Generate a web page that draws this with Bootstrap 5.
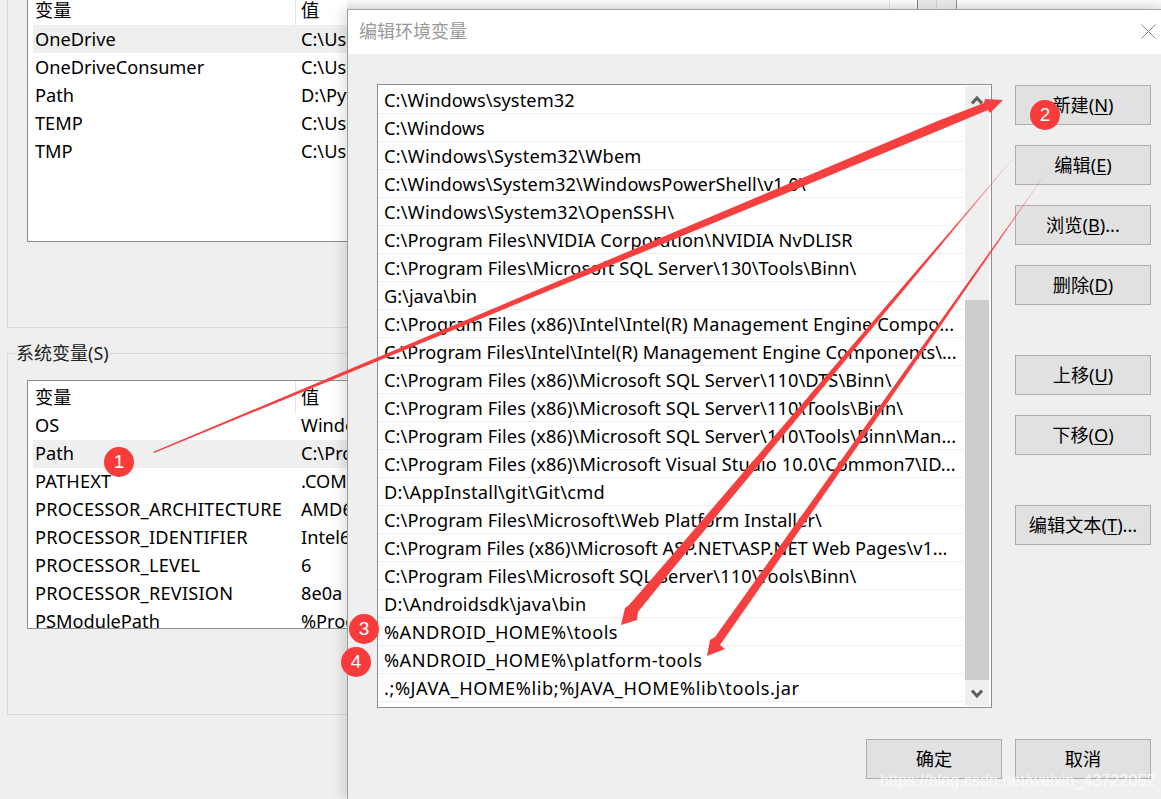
<!DOCTYPE html>
<html lang="zh">
<head>
  <meta charset="UTF-8">
  <title>编辑环境变量</title>
  <link href="https://cdn.jsdelivr.net/npm/bootstrap@5.3.0/dist/css/bootstrap.min.css" rel="stylesheet">
  <style>
    html, body { height: 100%; }
    body {
      background: #efefef;
      overflow: hidden;
      color: #000;
      font-family: "Noto Sans", "Noto Sans CJK SC", sans-serif;
      font-size: 18.2px;
      position: relative;
    }
    /* windows on the desktop */
    .win-back { position: absolute; left: 0; top: 0; width: 347px; height: 799px; background: #efefef; padding-left: 7px; overflow: hidden; }
    .win-dialog {
      position: absolute; left: 347px; top: 9px; width: 814px; height: 790px;
      background: #efefef; border-left: 1px solid #9b9b9b; border-top: 1px solid #a5a5a5;
      box-shadow: -6px 0 10px rgba(0,0,0,.10);
    }
    .top-strip { position: absolute; left: 347px; top: 0; width: 814px; height: 10px; background: linear-gradient(#fafafa, #e8e8e8); }
    .top-strip::before { content: ""; position: absolute; left: 542px; top: 0; height: 10px; border-left: 1px solid #dcdcdc; }
    .top-col { position: absolute; top: 0; width: 40px; height: 10px; background: #e6e6e6; border-left: 1px solid #7f7f8c; border-right: 1px solid #8c8c8c; left: 570px; }
    .top-col::after { content: ""; position: absolute; left: 18px; top: 0; height: 10px; border-left: 1px solid #d0d0d0; }

    .grp { border: 1px solid #d9d9d9; border-right: 0; padding-left: 19px; position: relative; width: 400px; }
    .grp-user { height: 328px; margin-bottom: 25px; border-top: 0; }
    .grp-sys { height: 362px; padding-top: 26px; }
    .grp-label { position: absolute; left: 7px; top: -13px; background: #efefef; padding: 0 1px; font-size: 18px; line-height: 24px; color: #222; }
    .var-box { width: 500px; background: #fff; border: 1px solid #8e8e8e; overflow: hidden; padding: 0 5px; }
    .grp-user .var-box { height: 242px; border-top: 0; }
    .grp-sys .var-box { height: 249px; }
    .var-row { height: 28px; line-height: 27px; white-space: nowrap; padding-left: 2px; }
    .grp-user .var-row { padding-top: 1px; }
    .var-row.is-sel { background: #efefef; }
    .var-name { width: 266px; flex: none; }
    .var-head .var-name { border-right: 1px solid #e2e2e2; width: 261px; margin-right: 5px; }
    .grp-user .var-head { height: 25px; line-height: 20px; padding-top: 0; }
    .grp-sys .var-head { height: 31px; line-height: 33px; }
    .ls-slight { letter-spacing: .1px; }
    .ls-caps { letter-spacing: .22px; }
    .ls-wide { letter-spacing: .45px; }
    .ls-wider { letter-spacing: .57px; }

    .dlg-title { height: 44px; background: #fff; color: #999; font-size: 18px; line-height: 43px; padding-left: 11px; position: relative; }
    .dlg-close { position: absolute; right: 5px; top: 14px; width: 15px; height: 15px; }
    .dlg-main { padding: 30px 10px 0 29px; gap: 23px; }
    .path-box { width: 615px; height: 624px; flex: none; background: #fff; border: 1px solid #8e8e8e; padding: 1px 2px 1px 0; }
    .path-list { width: 587px; flex: none; }
    .path-row { height: 28px; line-height: 27px; padding: 1px 0 0 6px; border-bottom: 1px solid #efefef; margin-right: 1px; white-space: nowrap; overflow: hidden; }
    .path-scroll { width: 24px; background: #efefef; }
    .sb-up { height: 28px; }
    .sb-down { height: 26px; }
    .sb-track { height: 186px; }
    .sb-thumb { height: 380px; background: #cdcdcd; }

    .side-btns { width: 136px; padding-top: 1px; }
    .dlg-btn {
      width: 136px; height: 40px; padding: 0; border-radius: 0;
      background: #e1e1e1; border: 1px solid #adadad; color: #000;
      font-size: 18.2px; line-height: 38px;
    }
    .dlg-btn u { text-underline-offset: 2px; }
    .btn-near { margin-top: 20px; }
    .btn-far { margin-top: 50px; }
    .dlg-foot { padding: 31px 10px 0 0; gap: 13px; }
    .watermark { position: absolute; left: 880px; top: 769px; color: rgba(255,255,255,.78); font-family: "Liberation Sans", sans-serif; font-size: 16.2px; line-height: 22px; white-space: nowrap; }

    .marks { position: absolute; left: 0; top: 0; }
    .mark-no { font-family: "Liberation Sans", sans-serif; }
  </style>
</head>
<body>

  <div class="win-back">
    <div class="grp grp-user">
      <div class="var-box">
        <div class="var-row var-head d-flex"><div class="var-name">变量</div><div>值</div></div>
        <div class="var-row is-sel d-flex"><div class="var-name">OneDrive</div><div>C:\Users</div></div>
        <div class="var-row d-flex"><div class="var-name">OneDriveConsumer</div><div>C:\Users</div></div>
        <div class="var-row d-flex"><div class="var-name">Path</div><div>D:\Python</div></div>
        <div class="var-row d-flex"><div class="var-name">TEMP</div><div>C:\Users</div></div>
        <div class="var-row d-flex"><div class="var-name">TMP</div><div>C:\Users</div></div>
      </div>
    </div>
    <div class="grp grp-sys">
      <div class="grp-label">系统变量(S)</div>
      <div class="var-box">
        <div class="var-row var-head d-flex"><div class="var-name">变量</div><div>值</div></div>
        <div class="var-row d-flex"><div class="var-name">OS</div><div>Windows_NT</div></div>
        <div class="var-row is-sel d-flex"><div class="var-name">Path</div><div>C:\Program</div></div>
        <div class="var-row d-flex"><div class="var-name ls-caps">PATHEXT</div><div>.COM;.EXE</div></div>
        <div class="var-row d-flex"><div class="var-name ls-caps">PROCESSOR_ARCHITECTURE</div><div>AMD64</div></div>
        <div class="var-row d-flex"><div class="var-name ls-caps">PROCESSOR_IDENTIFIER</div><div>Intel64</div></div>
        <div class="var-row d-flex"><div class="var-name ls-caps">PROCESSOR_LEVEL</div><div>6</div></div>
        <div class="var-row d-flex"><div class="var-name ls-caps">PROCESSOR_REVISION</div><div>8e0a</div></div>
        <div class="var-row d-flex"><div class="var-name">PSModulePath</div><div>%ProgramFiles%</div></div>
      </div>
    </div>
  </div>
  <div class="top-strip"><div class="top-col"></div></div>

  <div class="win-dialog">
    <div class="dlg-title">编辑环境变量
      <svg class="dlg-close" viewBox="0 0 15 15"><path d="M.5 .5 14.5 14.5M14.5 .5 .5 14.5" stroke="#8a8a8a" stroke-width="1" fill="none"/></svg>
    </div>
    <div class="dlg-main d-flex">
      <div class="path-box d-flex">
        <div class="path-list">
          <div class="path-row ls-slight">C:\Windows\system32</div>
          <div class="path-row">C:\Windows</div>
          <div class="path-row ls-caps">C:\Windows\System32\Wbem</div>
          <div class="path-row ls-slight">C:\Windows\System32\WindowsPowerShell\v1.0\</div>
          <div class="path-row ls-caps">C:\Windows\System32\OpenSSH\</div>
          <div class="path-row ls-slight">C:\Program Files\NVIDIA Corporation\NVIDIA NvDLISR</div>
          <div class="path-row ls-slight">C:\Program Files\Microsoft SQL Server\130\Tools\Binn\</div>
          <div class="path-row">G:\java\bin</div>
          <div class="path-row ls-slight">C:\Program Files (x86)\Intel\Intel(R) Management Engine Compo...</div>
          <div class="path-row">C:\Program Files\Intel\Intel(R) Management Engine Components\...</div>
          <div class="path-row ls-slight">C:\Program Files (x86)\Microsoft SQL Server\110\DTS\Binn\</div>
          <div class="path-row ls-slight">C:\Program Files (x86)\Microsoft SQL Server\110\Tools\Binn\</div>
          <div class="path-row ls-slight">C:\Program Files (x86)\Microsoft SQL Server\110\Tools\Binn\Man...</div>
          <div class="path-row ls-slight">C:\Program Files (x86)\Microsoft Visual Studio 10.0\Common7\ID...</div>
          <div class="path-row ls-caps">D:\AppInstall\git\Git\cmd</div>
          <div class="path-row ls-slight">C:\Program Files\Microsoft\Web Platform Installer\</div>
          <div class="path-row">C:\Program Files (x86)\Microsoft ASP.NET\ASP.NET Web Pages\v1...</div>
          <div class="path-row ls-slight">C:\Program Files\Microsoft SQL Server\110\Tools\Binn\</div>
          <div class="path-row ls-caps">D:\Androidsdk\java\bin</div>
          <div class="path-row ls-wide">%ANDROID_HOME%\tools</div>
          <div class="path-row ls-wide">%ANDROID_HOME%\platform-tools</div>
          <div class="path-row ls-wider">.;%JAVA_HOME%lib;%JAVA_HOME%lib\tools.jar</div>
        </div>
        <div class="path-scroll d-flex flex-column">
          <div class="sb-up d-flex align-items-center justify-content-center">
            <svg width="12" height="9" viewBox="0 0 12 9"><path d="M1 7.5 6 2 11 7.5" fill="none" stroke="#606060" stroke-width="3"/></svg>
          </div>
          <div class="sb-track"></div>
          <div class="sb-thumb"></div>
          <div class="sb-down d-flex align-items-center justify-content-center">
            <svg width="12" height="9" viewBox="0 0 12 9"><path d="M1 1.5 6 7 11 1.5" fill="none" stroke="#606060" stroke-width="3"/></svg>
          </div>
        </div>
      </div>
      <div class="side-btns d-flex flex-column">
        <button class="btn dlg-btn">新建(<u>N</u>)</button>
        <button class="btn dlg-btn btn-near">编辑(<u>E</u>)</button>
        <button class="btn dlg-btn btn-near">浏览(<u>B</u>)...</button>
        <button class="btn dlg-btn btn-near">删除(<u>D</u>)</button>
        <button class="btn dlg-btn btn-far">上移(<u>U</u>)</button>
        <button class="btn dlg-btn btn-near">下移(<u>O</u>)</button>
        <button class="btn dlg-btn btn-far">编辑文本(<u>T</u>)...</button>
      </div>
    </div>
    <div class="dlg-foot d-flex justify-content-end">
      <button class="btn dlg-btn">确定</button>
      <button class="btn dlg-btn">取消</button>
    </div>
  </div>

  <svg class="marks" width="1161" height="799" viewBox="0 0 1161 799">
    <defs>
      <linearGradient id="fade3" gradientUnits="userSpaceOnUse" x1="1020" y1="150" x2="940" y2="245">
        <stop offset="0" stop-color="#f64040" stop-opacity=".2"/>
        <stop offset="1" stop-color="#f64040"/>
      </linearGradient>
      <linearGradient id="fade4" gradientUnits="userSpaceOnUse" x1="1053" y1="163" x2="985" y2="260">
        <stop offset="0" stop-color="#f64040" stop-opacity=".3"/>
        <stop offset="1" stop-color="#f64040"/>
      </linearGradient>
    </defs>
    <polygon points="153,452 940,120 984,103 985,99 1003,100 990,113 988,110 940,130 154,453" fill="#f64040"/>
    <polygon points="1020,150 668,560 629,605 625,608 621,625 637,620 638,612 680,560" fill="url(#fade3)"/>
    <polygon points="1053,163 750,588 715,637 710,640 707,656 725,649 720,645 750,602" fill="url(#fade4)"/>
    <g fill="#f93b3b">
      <circle cx="119" cy="462" r="15"/>
      <circle cx="1045" cy="115" r="15"/>
      <circle cx="364" cy="629" r="15"/>
      <circle cx="356" cy="662" r="15"/>
    </g>
    <g class="mark-no" fill="#fff" font-size="19" text-anchor="middle">
      <text x="119" y="468">1</text>
      <text x="1045" y="121">2</text>
      <text x="364" y="635">3</text>
      <text x="356" y="668">4</text>
    </g>
  </svg>
  <div class="watermark">https://blog.csdn.net/weixin_43722052</div>

</body>
</html>
